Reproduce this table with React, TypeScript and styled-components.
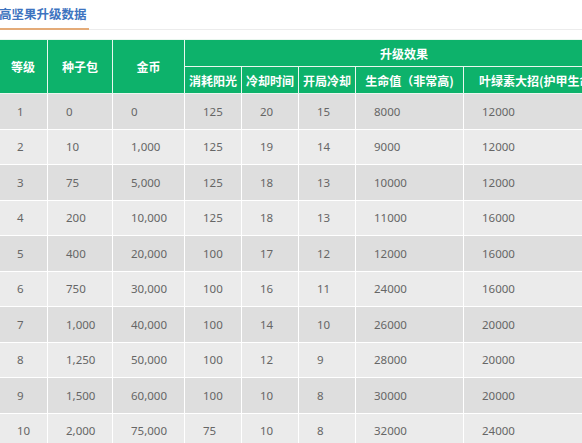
import React from "react";
import styled, { createGlobalStyle } from "styled-components";

const Global = createGlobalStyle`
  html, body { margin: 0; padding: 0; background: #fff; overflow: hidden; }
  body { font-family: "Noto Sans", "Noto Sans CJK SC", sans-serif; }
`;

const Page = styled.div`
  width: 582px;
  height: 443px;
  overflow: hidden;
`;

const TitleBar = styled.div`
  height: 29px;
  border-bottom: 1px solid #ececec;
  display: flex;
  align-items: flex-end;
`;

const Title = styled.h2`
  margin: 0 0 0 -1px;
  padding: 0 1px 6px 0;
  font-family: "Noto Sans CJK SC", sans-serif;
  font-size: 12.5px;
  font-weight: 700;
  line-height: 16px;
  color: #3d74c0;
  border-bottom: 2px solid #e4ab78;
  margin-bottom: -1px;
  width: 90px;
  box-sizing: border-box;
  white-space: nowrap;
`;

const Table = styled.table`
  margin: 9px 0 0 -2px;
  border-collapse: collapse;
  table-layout: fixed;
  width: 625px;
  font-family: "Noto Sans", "Noto Sans CJK SC", sans-serif;
`;

const HeadCell = styled.th`
  background: #0db26b;
  color: #fff;
  font-family: "Noto Sans CJK SC", sans-serif;
  font-size: 12px;
  font-weight: 700;
  text-align: center;
  border: 1px solid #e9f7ef;
  padding: 0;
  height: 26px;
  white-space: nowrap;
  overflow: hidden;
`;

const Row = styled.tr<{ $dark: boolean }>`
  height: 35.5px;
  background: ${(p) => (p.$dark ? "#dedede" : "#ebebeb")};
`;

const Cell = styled.td`
  border: 1px solid #fff;
  padding: 0 0 0 18px;
  font-size: 11.5px;
  color: #666;
  text-align: left;
  white-space: nowrap;
`;

const widths = [49, 65, 72, 57, 57, 57, 108, 160];

const rows: string[][] = [
  ["1", "0", "0", "125", "20", "15", "8000", "12000"],
  ["2", "10", "1,000", "125", "19", "14", "9000", "12000"],
  ["3", "75", "5,000", "125", "18", "13", "10000", "12000"],
  ["4", "200", "10,000", "125", "18", "13", "11000", "16000"],
  ["5", "400", "20,000", "100", "17", "12", "12000", "16000"],
  ["6", "750", "30,000", "100", "16", "11", "24000", "16000"],
  ["7", "1,000", "40,000", "100", "14", "10", "26000", "20000"],
  ["8", "1,250", "50,000", "100", "12", "9", "28000", "20000"],
  ["9", "1,500", "60,000", "100", "10", "8", "30000", "20000"],
  ["10", "2,000", "75,000", "75", "10", "8", "32000", "24000"],
];

export default function App() {
  return (
    <Page>
      <Global />
      <TitleBar>
        <Title>高坚果升级数据</Title>
      </TitleBar>
      <Table>
        <colgroup>
          {widths.map((w, i) => (
            <col key={i} style={{ width: w }} />
          ))}
        </colgroup>
        <thead>
          <tr>
            <HeadCell rowSpan={2}>等级</HeadCell>
            <HeadCell rowSpan={2}>种子包</HeadCell>
            <HeadCell rowSpan={2}>金币</HeadCell>
            <HeadCell colSpan={5}>升级效果</HeadCell>
          </tr>
          <tr>
            <HeadCell>消耗阳光</HeadCell>
            <HeadCell>冷却时间</HeadCell>
            <HeadCell>开局冷却</HeadCell>
            <HeadCell>生命值（非常高)</HeadCell>
            <HeadCell>叶绿素大招(护甲生命值)</HeadCell>
          </tr>
        </thead>
        <tbody>
          {rows.map((r, i) => (
            <Row key={i} $dark={i % 2 === 0}>
              {r.map((c, j) => (
                <Cell key={j}>{c}</Cell>
              ))}
            </Row>
          ))}
        </tbody>
      </Table>
    </Page>
  );
}
